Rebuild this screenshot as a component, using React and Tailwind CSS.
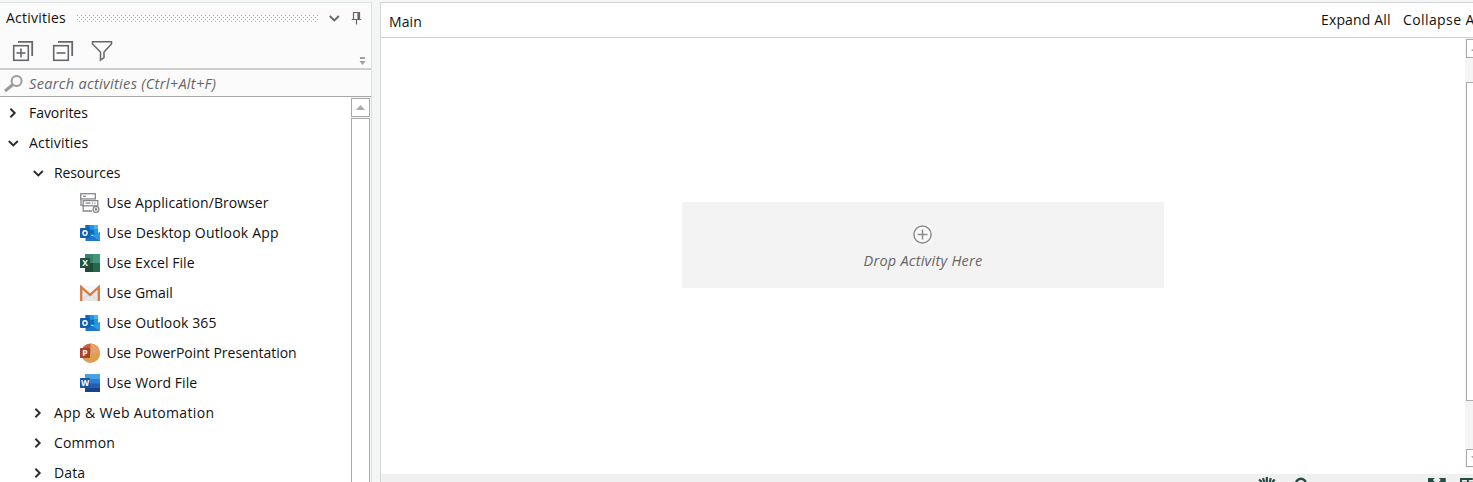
import React from "react";

function Chevron({ open, color = "#2b2b2b" }) {
  return (
    <svg className="shrink-0" width="12" height="12" viewBox="0 0 12 12" fill="none" stroke={color} strokeWidth="1.9">
      {open ? <path d="M1.8 4 L6.3 8.4 L10.8 4" /> : <path d="M3.4 1.8 L7.7 6 L3.4 10.2" />}
    </svg>
  );
}

function ExpandIcon({ plus }) {
  return (
    <svg width="22" height="22" viewBox="0 0 22 22" fill="none" stroke="#66666b" strokeWidth="1.6">
      <rect x="1.7" y="5.7" width="14.6" height="14.6" />
      <path d="M6 1.8 H20.2 V16" strokeWidth="1.8" />
      <path d="M4.5 13 H13.5" />
      {plus && <path d="M9 8.5 V17.5" />}
    </svg>
  );
}

function BrowserIcon() {
  return (
    <svg width="20" height="20" viewBox="0 0 20 20" fill="#fff" stroke="#88868a" strokeWidth="1.3">
      <rect x="0.7" y="0.7" width="14.6" height="5.2" />
      <path d="M3 3.3 H6" />
      <path d="M1 6 V12.4 H4 M3.2 12 V18 H12" fill="none" />
      <rect x="3.2" y="7.6" width="14.6" height="5.2" />
      <path d="M5.5 10.2 H10.5 M12 10.2 H13.2 M14.4 10.2 H15.6" />
      <circle cx="16" cy="16.4" r="2.9" />
      <circle cx="16" cy="16.4" r="0.7" />
    </svg>
  );
}

function OutlookIcon() {
  return (
    <svg width="20" height="20" viewBox="0 0 20 20">
      <path d="M5.5 2 H18 V12 H5.5Z" fill="#1490df" />
      <path d="M9.5 2 H14 V6 H9.5Z" fill="#2494de" />
      <path d="M14 2 H18 V6 H14Z" fill="#43b5ee" />
      <path d="M5.5 2 H9.5 V7 H5.5Z" fill="#0f6ab9" />
      <path d="M10 7 H14 V11 H10Z" fill="#0f6ab9" />
      <path d="M14 6 H18 V10 H14Z" fill="#2497dc" />
      <path d="M5.5 9 L12.5 13 L20 9 V18 H5.5Z" fill="#1d76cc" />
      <path d="M12.5 13 L20 9 V18Z" fill="#3299df" />
      <rect x="0" y="5" width="10" height="10" rx="0.7" fill="#0f5fb5" />
      <ellipse cx="5" cy="10" rx="2.1" ry="2.3" fill="none" stroke="#fff" strokeWidth="1.4" />
    </svg>
  );
}

function Letter({ children, fill }) {
  return (
    <>
      <rect x="0" y="5" width="10" height="10" rx="0.6" fill={fill} />
      <text x="5" y="13.1" textAnchor="middle" fill="#fff" fontSize="8.5" fontWeight="700" fontFamily="Open Sans, sans-serif">{children}</text>
    </>
  );
}

function ExcelIcon() {
  return (
    <svg width="20" height="20" viewBox="0 0 20 20">
      <rect x="5" y="1" width="15" height="18" fill="#25674c" />
      <path d="M5 1 H13 V10 H5Z" fill="#368568" />
      <path d="M13 1 H20 V10 H13Z" fill="#46957b" />
      <path d="M5 10 H13 V19 H5Z" fill="#1c4b3b" />
      <Letter fill="#1d5341">X</Letter>
    </svg>
  );
}

function GmailIcon() {
  return (
    <svg width="20" height="20" viewBox="0 0 20 20">
      <path d="M1 3 H19 V18 H1Z" fill="#e7e7e8" />
      <path d="M2 3 L10 10.5 L18 3Z" fill="#f6f6f6" />
      <path d="M3 17 L10 10 L17 17" fill="none" stroke="#d3d3d6" />
      <path d="M1.2 18 V4 L10 12 L18.8 4 V18" fill="none" stroke="#d97840" strokeWidth="2.3" />
    </svg>
  );
}

function PowerPointIcon() {
  return (
    <svg width="20" height="20" viewBox="0 0 20 20">
      <circle cx="10.5" cy="10" r="9.4" fill="#c2623a" />
      <path d="M10.5 0.6 A9.4 9.4 0 0 1 19.9 10 H10.5Z" fill="#e3a16c" />
      <path d="M10.5 10 H19.9 A9.4 9.4 0 0 1 3 15.8Z" fill="#dda04e" />
      <Letter fill="#a94227">P</Letter>
    </svg>
  );
}

function WordIcon() {
  return (
    <svg width="20" height="20" viewBox="0 0 20 20">
      <rect x="5" y="1" width="15" height="18" rx="0.6" fill="#245fae" />
      <path d="M5 1 H20 V6 H5Z" fill="#48a0e5" />
      <path d="M5 6 H20 V10.5 H5Z" fill="#2d7dd4" />
      <path d="M5 15 H20 V19 H5Z" fill="#164389" />
      <Letter fill="#1b57a7">W</Letter>
    </svg>
  );
}

const resources = [
  [BrowserIcon, "Use Application/Browser", "tracking-[0.05px]"],
  [OutlookIcon, "Use Desktop Outlook App", "tracking-[0.19px]"],
  [ExcelIcon, "Use Excel File", "tracking-[0.05px]"],
  [GmailIcon, "Use Gmail", "tracking-[0px]"],
  [OutlookIcon, "Use Outlook 365", "tracking-[0.12px]"],
  [PowerPointIcon, "Use PowerPoint Presentation", "tracking-[-0.02px]"],
  [WordIcon, "Use Word File", "tracking-[0.07px]"],
];

function Branch({ open, nested, tracking, children }) {
  return (
    <div className={`flex h-[30px] items-center gap-[10px] ${nested ? "pl-8" : "pl-[7px]"}`}>
      <Chevron open={open} />
      <span className={tracking}>{children}</span>
    </div>
  );
}

function ActivitiesPanel() {
  return (
    <aside className="flex h-[480px] w-[372px] shrink-0 flex-col border-t border-r border-[#dde1df] bg-[#fbfbfb]">
      <div className="flex h-[30px] shrink-0 items-center pl-[6px]">
        <span className="w-[71px] tracking-[0.22px]">Activities</span>
        <svg width="242" height="7">
          <defs>
            <pattern id="grip" width="4" height="4" patternUnits="userSpaceOnUse">
              <path d="M0 0 H1 V1 H0Z M2 2 H3 V3 H2Z" fill="#a9a9a9" />
            </pattern>
          </defs>
          <rect width="242" height="7" fill="url(#grip)" />
        </svg>
        <div className="ml-[9px]"><Chevron open color="#68666a" /></div>
        <svg className="ml-[11px]" width="11" height="14" viewBox="0 0 11 14" fill="none" stroke="#68666a" strokeWidth="1.2">
          <path d="M2.5 8 V1.5 H8.5 V8 M0.8 8.5 H10.2 M5.5 9 V13.4" />
          <path d="M7.3 2 V8" strokeWidth="1.8" />
        </svg>
      </div>
      <div className="flex h-[35px] shrink-0 items-start pl-3 pt-[7px]">
        <ExpandIcon plus />
        <div className="ml-[18px]"><ExpandIcon /></div>
        <svg className="ml-[17px]" width="22" height="22" viewBox="0 0 22 22" fill="none" stroke="#66666b" strokeWidth="1.5">
          <path d="M1.5 1.7 H20.5 V4 L13 12 V17.5 L9.5 20 V12 L1.5 4Z" />
        </svg>
        <svg className="ml-auto mr-[5px] mt-[17px]" width="7" height="9" fill="#a0a0a2">
          <path d="M1 0 H6 V2 H1Z M0.5 4 H6.5 L3.5 8Z" />
        </svg>
      </div>
      <div className="flex h-[29px] shrink-0 items-center border-t-2 border-b border-t-[#cecece] border-b-[#a8a8a8] pl-1">
        <svg className="mt-[2px]" width="20" height="20" viewBox="0 0 20 20" fill="none" stroke="#9b9b9b">
          <circle cx="12.6" cy="6.9" r="5" strokeWidth="2" />
          <path d="M9 10.5 L1 17" strokeWidth="3" />
        </svg>
        <span className="ml-[5px] pt-[2px] text-[14.5px] italic tracking-[0.33px] text-[#666]">Search activities (Ctrl+Alt+F)</span>
      </div>
      <div className="flex min-h-0 flex-1 overflow-hidden bg-white">
        <div className="flex-1 pt-[1px]">
          <Branch tracking="tracking-[-0.05px]">Favorites</Branch>
          <Branch open tracking="tracking-[0.17px]">Activities</Branch>
          <Branch open nested tracking="tracking-[-0.1px]">Resources</Branch>
          {resources.map(([Icon, label, tracking]) => (
            <div key={label} className="flex h-[30px] items-center gap-[6.5px] pl-20">
              <Icon />
              <span className={tracking}>{label}</span>
            </div>
          ))}
          <Branch nested tracking="tracking-[0.34px]">App &amp; Web Automation</Branch>
          <Branch nested tracking="tracking-[0.14px]">Common</Branch>
          <Branch nested tracking="tracking-[0.1px]">Data</Branch>
        </div>
        <div className="flex w-5 flex-col gap-[1px] bg-[#f5f5f5] pt-[1px] pr-[1px]">
          <div className="flex h-[19px] shrink-0 items-center justify-center border border-[#aaa] bg-white">
            <svg width="9" height="5"><path d="M0 5 L4.5 0 L9 5Z" fill="#aaa" /></svg>
          </div>
          <div className="flex-1 border border-b-0 border-[#aaa] bg-white" />
        </div>
      </div>
    </aside>
  );
}

function StatusBar() {
  return (
    <div className="flex h-2 shrink-0 items-start bg-[#f0f0f0] pl-[877px] pt-[3px]">
      <svg width="20" height="5" viewBox="0 0 20 5" fill="none" stroke="#224c43" strokeWidth="2.2">
        <path d="M1 2.5 L4 5 M5 1 L6.5 5 M9 0 V5 M13 1 L12 5 M17 2.5 L14.5 5" />
      </svg>
      <svg className="ml-[17px]" width="14" height="5" viewBox="0 0 14 5" fill="none" stroke="#224c43" strokeWidth="2.6">
        <circle cx="6" cy="6.5" r="4.8" />
      </svg>
      <svg className="ml-[120px]" width="18" height="5" viewBox="0 0 18 5" fill="#224c43">
        <path d="M0 1 H7 L5 3 L7 5 H0Z M11 1 H18 V5 H11 L13 3Z" />
      </svg>
      <svg className="ml-[14px]" width="13" height="5" viewBox="0 0 13 5">
        <path d="M0 1 H13 V3 H0Z M0 3 H2 V5 H0Z M7 3 H9 V5 H7Z" fill="#224c43" />
        <path d="M2 4 H7 V5 H2Z M9 4 H13 V5 H9Z" fill="#b9bdbc" />
      </svg>
    </div>
  );
}

function Designer() {
  return (
    <main className="flex h-[480px] min-w-0 flex-1 flex-col overflow-hidden border-t border-l border-[#d2d5d4] bg-white">
      <header className="flex h-[35px] shrink-0 items-center border-b border-[#cfcfcf] pl-2">
        <span className="pt-[3px] tracking-[0.1px]">Main</span>
        <div className="ml-auto flex shrink-0 whitespace-nowrap">
          <span className="w-[82px] tracking-[0.15px]">Expand All</span>
          <span className="w-[70px] tracking-[0.4px]">Collapse A</span>
        </div>
      </header>
      <div className="flex min-h-0 flex-1">
        <section className="flex-1 pl-[301px] pt-[164px]">
          <div className="flex h-[86px] w-[482px] flex-col items-center bg-[#f3f3f3] pt-[23px]">
            <svg className="mr-[1px] bg-[#fafafa]" width="19" height="19" viewBox="0 0 19 19" fill="none" stroke="#8b8b8b" strokeWidth="1.5">
              <circle cx="9.5" cy="9.5" r="8.6" />
              <path d="M4.5 9.5 H14.5 M9.5 4.5 V14.5" />
            </svg>
            <span className="mt-[7px] text-[14.5px] italic tracking-[0.25px] text-[#666]">Drop Activity Here</span>
          </div>
        </section>
        <div className="mb-[6px] flex w-2 flex-col overflow-hidden bg-[#f4f4f4] pl-[1px] pt-[1px]">
          <div className="flex h-[19px] w-[19px] shrink-0 items-center justify-center border border-[#aaa] bg-white">
            <svg width="9" height="5"><path d="M0 5 L4.5 0 L9 5Z" fill="#aaa" /></svg>
          </div>
          <div className="mt-6 h-[319px] w-[19px] shrink-0 border border-[#aaa] bg-white" />
          <div className="mt-12 flex h-[18px] w-[19px] shrink-0 items-center justify-center border border-[#aaa] bg-white">
            <svg width="9" height="5"><path d="M0 0 L4.5 5 L9 0Z" fill="#aaa" /></svg>
          </div>
        </div>
      </div>
      <StatusBar />
    </main>
  );
}

export default function App() {
  return (
    <div className="flex h-[482px] w-[1473px] gap-2 overflow-hidden bg-[#f4f5f5] pt-[2px] font-['Open_Sans',sans-serif] text-[14px] leading-5 text-[#111]">
      <ActivitiesPanel />
      <Designer />
    </div>
  );
}
